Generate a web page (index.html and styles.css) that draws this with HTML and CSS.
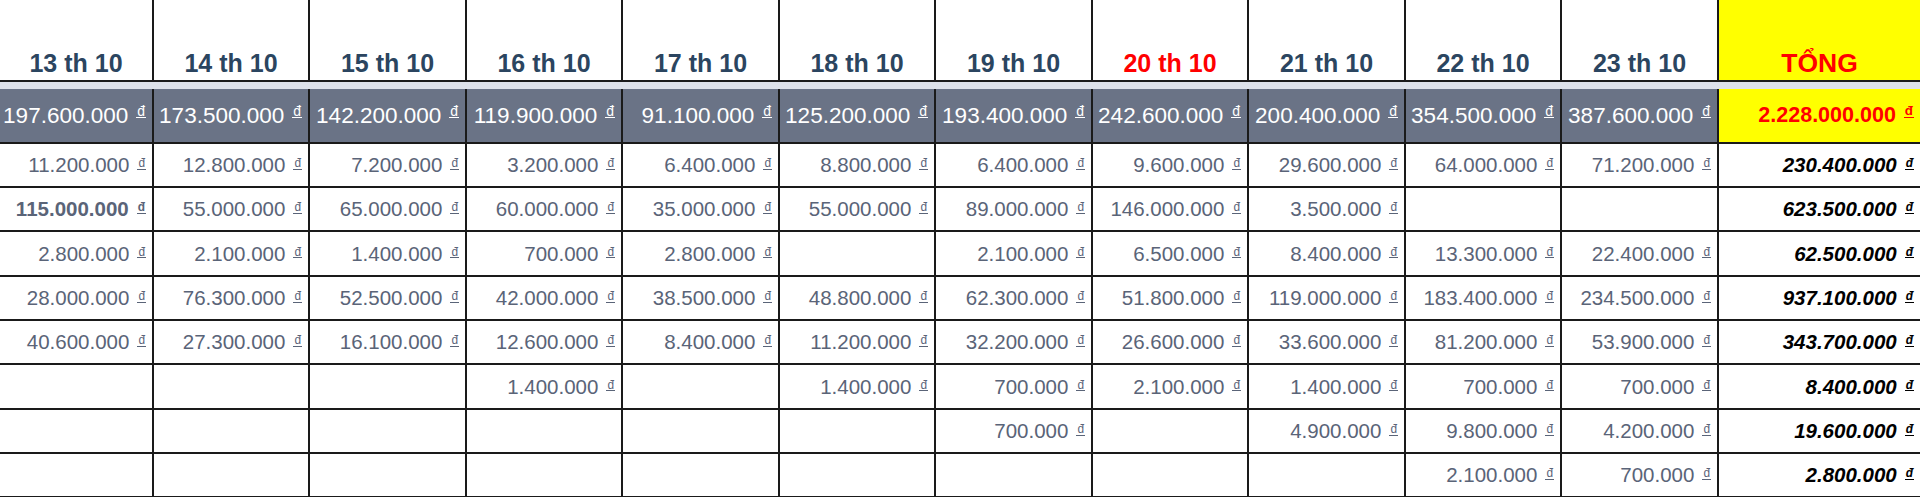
FILE: index.html
```html
<!DOCTYPE html>
<html lang="vi">
<head>
<meta charset="utf-8">
<title>Bảng doanh thu</title>
<link rel="stylesheet" href="styles.css">
</head>
<body>
<table class="sheet">
  <colgroup>
    <col class="c1"><col class="c2"><col class="c3"><col class="c2"><col class="c3"><col class="c2"><col class="c3"><col class="c2"><col class="c3"><col class="c2"><col class="c3"><col class="ct">
  </colgroup>
  <thead>
    <tr class="head">
      <th>13 th 10</th><th>14 th 10</th><th>15 th 10</th><th>16 th 10</th><th>17 th 10</th><th>18 th 10</th><th>19 th 10</th><th class="red">20 th 10</th><th>21 th 10</th><th>22 th 10</th><th>23 th 10</th><th class="total red big">TỔNG</th>
    </tr>
    <tr class="stripe">
      <td></td><td></td><td></td><td></td><td></td><td></td><td></td><td></td><td></td><td></td><td></td><td></td>
    </tr>
  </thead>
  <tbody>
    <tr class="sum">
      <td>197.600.000<span class="cur">đ</span></td>
      <td>173.500.000<span class="cur">đ</span></td>
      <td>142.200.000<span class="cur">đ</span></td>
      <td>119.900.000<span class="cur">đ</span></td>
      <td>91.100.000<span class="cur">đ</span></td>
      <td>125.200.000<span class="cur">đ</span></td>
      <td>193.400.000<span class="cur">đ</span></td>
      <td>242.600.000<span class="cur">đ</span></td>
      <td>200.400.000<span class="cur">đ</span></td>
      <td>354.500.000<span class="cur">đ</span></td>
      <td>387.600.000<span class="cur">đ</span></td>
      <td class="total grand">2.228.000.000<span class="cur">đ</span></td>
    </tr>
    <tr class="row">
      <td>11.200.000<span class="cur">đ</span></td>
      <td>12.800.000<span class="cur">đ</span></td>
      <td>7.200.000<span class="cur">đ</span></td>
      <td>3.200.000<span class="cur">đ</span></td>
      <td>6.400.000<span class="cur">đ</span></td>
      <td>8.800.000<span class="cur">đ</span></td>
      <td>6.400.000<span class="cur">đ</span></td>
      <td>9.600.000<span class="cur">đ</span></td>
      <td>29.600.000<span class="cur">đ</span></td>
      <td>64.000.000<span class="cur">đ</span></td>
      <td>71.200.000<span class="cur">đ</span></td>
      <td class="rowtotal">230.400.000<span class="cur">đ</span></td>
    </tr>
    <tr class="row">
      <td class="strong">115.000.000<span class="cur">đ</span></td>
      <td>55.000.000<span class="cur">đ</span></td>
      <td>65.000.000<span class="cur">đ</span></td>
      <td>60.000.000<span class="cur">đ</span></td>
      <td>35.000.000<span class="cur">đ</span></td>
      <td>55.000.000<span class="cur">đ</span></td>
      <td>89.000.000<span class="cur">đ</span></td>
      <td>146.000.000<span class="cur">đ</span></td>
      <td>3.500.000<span class="cur">đ</span></td>
      <td></td>
      <td></td>
      <td class="rowtotal">623.500.000<span class="cur">đ</span></td>
    </tr>
    <tr class="row r45">
      <td>2.800.000<span class="cur">đ</span></td>
      <td>2.100.000<span class="cur">đ</span></td>
      <td>1.400.000<span class="cur">đ</span></td>
      <td>700.000<span class="cur">đ</span></td>
      <td>2.800.000<span class="cur">đ</span></td>
      <td></td>
      <td>2.100.000<span class="cur">đ</span></td>
      <td>6.500.000<span class="cur">đ</span></td>
      <td>8.400.000<span class="cur">đ</span></td>
      <td>13.300.000<span class="cur">đ</span></td>
      <td>22.400.000<span class="cur">đ</span></td>
      <td class="rowtotal">62.500.000<span class="cur">đ</span></td>
    </tr>
    <tr class="row">
      <td>28.000.000<span class="cur">đ</span></td>
      <td>76.300.000<span class="cur">đ</span></td>
      <td>52.500.000<span class="cur">đ</span></td>
      <td>42.000.000<span class="cur">đ</span></td>
      <td>38.500.000<span class="cur">đ</span></td>
      <td>48.800.000<span class="cur">đ</span></td>
      <td>62.300.000<span class="cur">đ</span></td>
      <td>51.800.000<span class="cur">đ</span></td>
      <td>119.000.000<span class="cur">đ</span></td>
      <td>183.400.000<span class="cur">đ</span></td>
      <td>234.500.000<span class="cur">đ</span></td>
      <td class="rowtotal">937.100.000<span class="cur">đ</span></td>
    </tr>
    <tr class="row">
      <td>40.600.000<span class="cur">đ</span></td>
      <td>27.300.000<span class="cur">đ</span></td>
      <td>16.100.000<span class="cur">đ</span></td>
      <td>12.600.000<span class="cur">đ</span></td>
      <td>8.400.000<span class="cur">đ</span></td>
      <td>11.200.000<span class="cur">đ</span></td>
      <td>32.200.000<span class="cur">đ</span></td>
      <td>26.600.000<span class="cur">đ</span></td>
      <td>33.600.000<span class="cur">đ</span></td>
      <td>81.200.000<span class="cur">đ</span></td>
      <td>53.900.000<span class="cur">đ</span></td>
      <td class="rowtotal">343.700.000<span class="cur">đ</span></td>
    </tr>
    <tr class="row r45">
      <td></td>
      <td></td>
      <td></td>
      <td>1.400.000<span class="cur">đ</span></td>
      <td></td>
      <td>1.400.000<span class="cur">đ</span></td>
      <td>700.000<span class="cur">đ</span></td>
      <td>2.100.000<span class="cur">đ</span></td>
      <td>1.400.000<span class="cur">đ</span></td>
      <td>700.000<span class="cur">đ</span></td>
      <td>700.000<span class="cur">đ</span></td>
      <td class="rowtotal">8.400.000<span class="cur">đ</span></td>
    </tr>
    <tr class="row">
      <td></td>
      <td></td>
      <td></td>
      <td></td>
      <td></td>
      <td></td>
      <td>700.000<span class="cur">đ</span></td>
      <td></td>
      <td>4.900.000<span class="cur">đ</span></td>
      <td>9.800.000<span class="cur">đ</span></td>
      <td>4.200.000<span class="cur">đ</span></td>
      <td class="rowtotal">19.600.000<span class="cur">đ</span></td>
    </tr>
    <tr class="row">
      <td></td>
      <td></td>
      <td></td>
      <td></td>
      <td></td>
      <td></td>
      <td></td>
      <td></td>
      <td></td>
      <td>2.100.000<span class="cur">đ</span></td>
      <td>700.000<span class="cur">đ</span></td>
      <td class="rowtotal">2.800.000<span class="cur">đ</span></td>
    </tr>
  </tbody>
</table>
</body>
</html>
```
FILE: styles.css
```css
html, body {
  margin: 0;
  padding: 0;
  background: #ffffff;
  overflow: hidden;
}

.sheet {
  width: 1920px;
  table-layout: fixed;
  border-collapse: separate;
  border-spacing: 0;
  font-family: "Liberation Sans", Arial, Helvetica, sans-serif;
}

.c1 { width: 154px; }
.c2 { width: 156px; }
.c3 { width: 157px; }
.ct { width: 201px; }

.sheet th,
.sheet td {
  box-sizing: border-box;
  border: 0 solid #1a1a1a;
  border-right-width: 2px;
  border-bottom-width: 2px;
  padding: 0 6px 0 0;
  white-space: nowrap;
  overflow: hidden;
}

.sheet tr > :last-child { border-right-width: 0; }

.head th {
  height: 82px;
  padding: 0 0 3px 0;
  vertical-align: bottom;
  text-align: center;
  font-size: 25px;
  font-weight: 700;
  color: #2b4560;
  line-height: 28px;
}

.head th.big {
  font-size: 26.5px;
}

.red { color: #ff0000 !important; }

.total { background: #ffff00; }

.stripe td {
  height: 7px;
  padding: 0;
  background: #dde1e9;
  border-width: 0;
}

.sum td {
  height: 55px;
  background: #6a7386;
  color: #ffffff;
  font-size: 22.5px;
  text-align: right;
  vertical-align: middle;
}

.sum td.grand {
  background: #ffff00;
  color: #ff0000;
  font-weight: 700;
  font-size: 21.5px;
}

.row td {
  height: 44px;
  font-size: 20.5px;
  color: #5a6478;
  text-align: right;
  vertical-align: middle;
}

.row.r45 td { height: 45px; }

.row td.strong {
  font-weight: 700;
}

.row td.rowtotal {
  color: #000000;
  font-weight: 700;
  font-style: italic;
}

.cur {
  display: inline-block;
  margin-left: 8px;
  padding: 0 1px;
  font-size: 0.58em;
  line-height: 0.82em;
  border-bottom: 1px solid currentColor;
  vertical-align: 0.41em;
}

.sum .cur {
  font-size: 0.62em;
  vertical-align: 0.5em;
}
```
